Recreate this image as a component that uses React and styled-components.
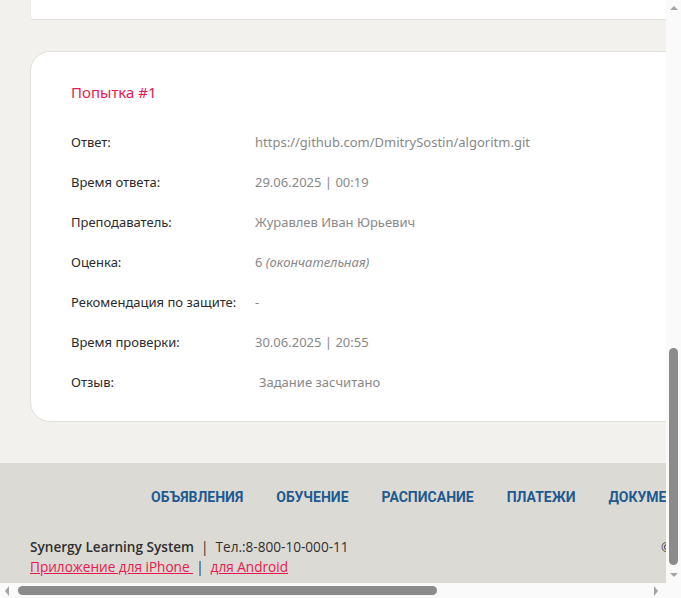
import styled, { createGlobalStyle } from 'styled-components';

const GlobalStyle = createGlobalStyle`
    html, body {
        margin: 0;
        padding: 0;
        background: #ffffff;
    }
    body {
        font-family: "Open Sans", "Noto Sans", Arial, sans-serif;
    }
`

const rows = [
    { label: "Ответ:", value: "https://github.com/DmitrySostin/algoritm.git" },
    { label: "Время ответа:", value: "29.06.2025 | 00:19" },
    { label: "Преподаватель:", value: "Журавлев Иван Юрьевич" },
    { label: "Оценка:", value: "6", note: "(окончательная)" },
    { label: "Рекомендация по защите:", value: "-" },
    { label: "Время проверки:", value: "30.06.2025 | 20:55" },
    { label: "Отзыв:", value: " Задание засчитано", indent: true },
]

const navItems = ["Объявления", "Обучение", "Расписание", "Платежи", "Документы"]

function Arrow({ dir }) {
    const points = {
        up: "1,6 5,2 9,6",
        down: "1,2 5,6 9,2",
        left: "6,0 2,5 6,10",
        right: "2,0 6,5 2,10",
    }[dir]
    const vertical = dir === "up" || dir === "down"
    return (
        <svg width={vertical ? 10 : 8} height={vertical ? 8 : 10} viewBox={vertical ? "0 0 10 8" : "0 0 8 10"}>
            <polygon points={points} fill="#a3a3a3" />
        </svg>
    )
}

export default function App() {
    return (
        <>
            <GlobalStyle />
            <Viewport>
                <Content>
                    <Page>
                        <PrevCard />
                        <AttemptCard>
                            <AttemptTitle>Попытка #1</AttemptTitle>
                            {rows.map((row) => (
                                <InfoRow key={row.label}>
                                    <Label>{row.label}</Label>
                                    <Value $indent={row.indent}>
                                        {row.value.trim()}
                                        {row.note && <Note> {row.note}</Note>}
                                    </Value>
                                </InfoRow>
                            ))}
                        </AttemptCard>
                    </Page>
                    <Footer>
                        <Nav>
                            {navItems.map((item) => (
                                <NavLink key={item}>{item}</NavLink>
                            ))}
                        </Nav>
                        <FooterBottom>
                            <FooterInfo>
                                <FooterLine>
                                    <Brand>Synergy Learning System</Brand>
                                    <Sep>|</Sep>
                                    <span>Тел.:8-800-10-000-11</span>
                                </FooterLine>
                                <FooterLine>
                                    <AppLink>Приложение для iPhone </AppLink>
                                    <Sep $tight>|</Sep>
                                    <AppLink>для Android</AppLink>
                                </FooterLine>
                            </FooterInfo>
                            <Copyright>©</Copyright>
                        </FooterBottom>
                    </Footer>
                </Content>
                <VTrack>
                    <Arrow dir="up" />
                    <VThumbArea>
                        <VThumb />
                    </VThumbArea>
                    <Arrow dir="down" />
                </VTrack>
                <HTrack>
                    <Arrow dir="left" />
                    <HThumbArea>
                        <HThumb />
                    </HThumbArea>
                    <Arrow dir="right" />
                </HTrack>
            </Viewport>
        </>
    )
}


// styled-components
const Viewport = styled.div`
    width: 681px;
    height: 598px;
    display: grid;
    grid-template-columns: 666px 15px;
    grid-template-rows: 583px 15px;
    overflow: hidden;
    background: #fafafa;
`

const Content = styled.div`
    overflow: hidden;
    background: #f2f1ed;
    display: flex;
    flex-direction: column;
`

const Page = styled.div`
    width: 760px;
    padding: 0 0 41px 30px;
    display: flex;
    flex-direction: column;
    gap: 31px;
`

const PrevCard = styled.div`
    height: 19px;
    background: #fff;
    border-bottom: 1px solid #e2e1dc;
    border-left: 1px solid #e8e7e2;
    border-radius: 0 0 4px 4px;
`

const AttemptCard = styled.div`
    background: #fff;
    border: 1px solid #e0dfda;
    border-radius: 20px;
    padding: 30px 40px 19px;
`

const AttemptTitle = styled.div`
    font-family: "Noto Sans", "Open Sans", sans-serif;
    font-size: 15px;
    line-height: 20px;
    color: #e8194f;
    margin-bottom: 20px;
`

const InfoRow = styled.div`
    display: flex;
    align-items: center;
    height: 40px;
    font-family: "Noto Sans", "Open Sans", sans-serif;
    font-size: 13px;
`

const Label = styled.div`
    width: 184px;
    flex: none;
    color: #2b2b2b;
`

const Value = styled.div`
    color: #888888;
    padding-left: ${(p) => (p.$indent ? '4px' : '0')};
    white-space: nowrap;
`

const Note = styled.i`
    font-style: italic;
`

const Footer = styled.footer`
    height: 120px;
    flex: none;
    background: #dcdad5;
    width: 760px;
    font-family: "Open Sans", "Noto Sans", sans-serif;
`

const Nav = styled.nav`
    display: flex;
    gap: 33px;
    padding: 25px 0 0 151px;
    height: 42px;
`

const NavLink = styled.a`
    font-family: Roboto, "Noto Sans", sans-serif;
    font-weight: 700;
    font-size: 14px;
    line-height: 18px;
    text-transform: uppercase;
    color: #1f5a8f;
    white-space: nowrap;
`

const FooterBottom = styled.div`
    display: flex;
    padding: 7px 0 0 30px;
`

const FooterInfo = styled.div`
    width: 631px;
    flex: none;
    display: flex;
    flex-direction: column;
`

const FooterLine = styled.div`
    display: flex;
    align-items: center;
    font-size: 13.6px;
    line-height: 20px;
    color: #2f2f2f;
    white-space: pre;
`

const Brand = styled.span`
    font-weight: 600;
`

const Sep = styled.span`
    margin: ${(p) => (p.$tight ? '0 7px 0 3px' : '0 7px 0 7px')};
    color: #2f2f2f;
`

const AppLink = styled.a`
    color: #e8194f;
    text-decoration: underline;
    white-space: pre;
`

const Copyright = styled.div`
    font-size: 13px;
    line-height: 20px;
    color: #2f2f2f;
    white-space: nowrap;
`

const VTrack = styled.div`
    background: #fafafa;
    display: flex;
    flex-direction: column;
    align-items: center;
    padding: 4px 0;
    grid-row: 1 / 3;
    grid-column: 2;
    height: 583px;
    box-sizing: border-box;
`

const VThumbArea = styled.div`
    flex: 1;
    width: 100%;
    display: flex;
    flex-direction: column;
    justify-content: flex-end;
    align-items: center;
    padding: 0 0 6px;
`

const VThumb = styled.div`
    width: 9px;
    height: 217px;
    border-radius: 5px;
    background: #8b8b8b;
`

const HTrack = styled.div`
    background: #fafafa;
    display: flex;
    align-items: center;
    padding: 0 6px 0 3px;
`

const HThumbArea = styled.div`
    flex: 1;
    padding-left: 7px;
    display: flex;
    align-items: center;
`

const HThumb = styled.div`
    width: 419px;
    height: 9px;
    border-radius: 5px;
    background: #8b8b8b;
`
